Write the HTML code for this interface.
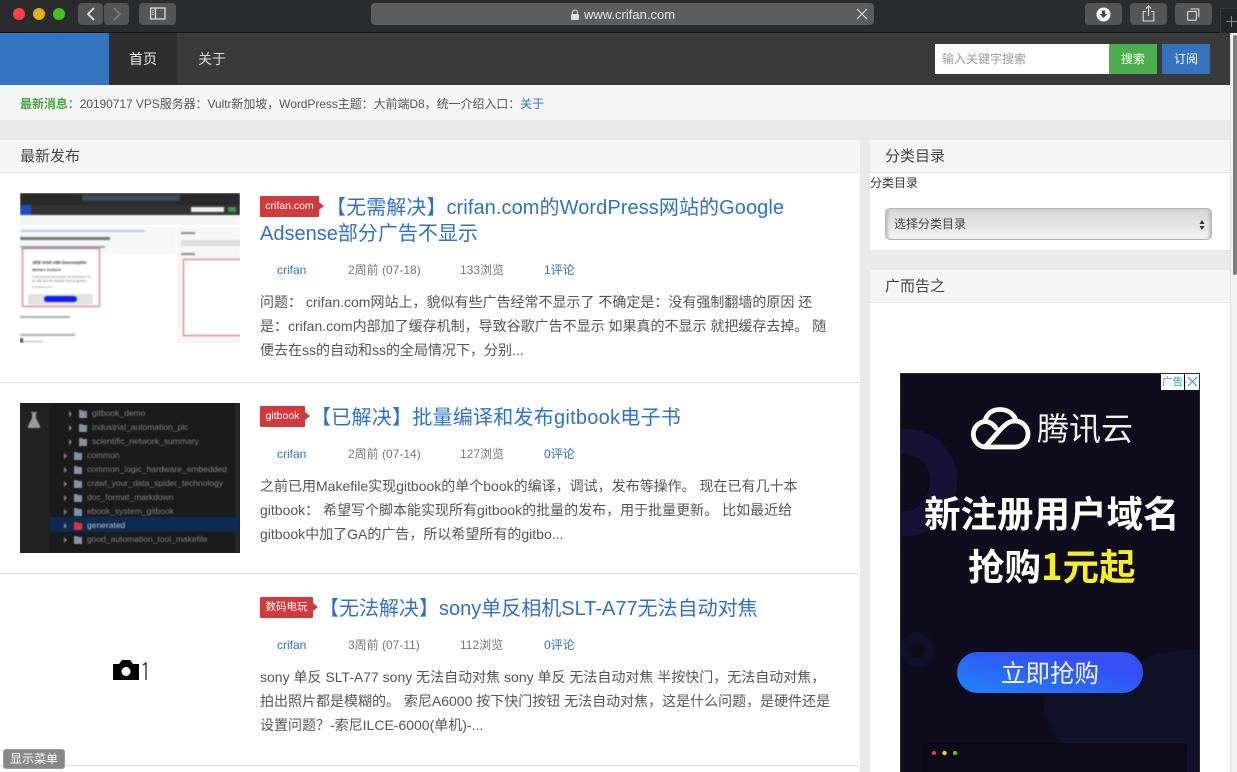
<!DOCTYPE html>
<html lang="zh-CN"><head><meta charset="utf-8"><title>crifan</title>
<style>
*{box-sizing:border-box}
html,body{margin:0;padding:0;width:1237px;height:772px;overflow:hidden;background:#e9e9e9}
body{position:relative;font-family:"Liberation Sans","Noto Sans CJK SC",sans-serif;color:#444}
.a{position:absolute;white-space:nowrap}
.btn{position:absolute;top:3px;height:22px;background:#555;border-radius:4px}
.t{position:absolute;left:260px;font-size:20px;line-height:26px;color:#2f72c4;white-space:nowrap}
.tag{position:absolute;left:260px;height:21px;background:#cf3a3f;color:#fff;font-size:10.500px;line-height:21px;text-align:center;border-radius:1px}
.tag:after{content:"";position:absolute;right:-5px;top:6px;border-left:5px solid #cf3a3f;border-top:4.500px solid transparent;border-bottom:4.500px solid transparent}
.m{position:absolute;font-size:12px;line-height:18px;color:#777;white-space:nowrap}
.l{color:#2f72c4}
.d{position:absolute;left:260px;font-size:14px;line-height:24px;color:#555;white-space:nowrap}
.hd{position:absolute;height:33px;background:#f5f5f5;border-bottom:1px solid #e6e6e6;font-size:15px;line-height:33px;color:#444}
.hr{position:absolute;left:0;width:860px;height:1px;background:#e3e3e3}
</style></head><body>

<!-- browser chrome -->
<div class="a" style="left:0;top:0;width:1237px;height:33px;background:#2a2b2c;border-bottom:1px solid #111"></div>
<div class="a" style="left:13px;top:8px;width:12px;height:12px;border-radius:50%;background:#fb4143"></div>
<div class="a" style="left:33px;top:8px;width:12px;height:12px;border-radius:50%;background:#e2b01e"></div>
<div class="a" style="left:53px;top:8px;width:12px;height:12px;border-radius:50%;background:#3fc325"></div>
<div class="btn" style="left:78px;width:25px"></div>
<div class="btn" style="left:104px;width:25px"></div>
<div class="btn" style="left:139px;width:37px"></div>
<svg class="a" style="left:78px;top:3px" width="52" height="22" fill="none"><path d="M16 5l-6 6 6 6" stroke="#e8e8e8" stroke-width="1.700"/><path d="M36 5l6 6-6 6" stroke="#7c7c7c" stroke-width="1.700"/></svg>
<svg class="a" style="left:150px;top:7px" width="16" height="14" fill="none" stroke="#e5e5e5" stroke-width="1.200"><rect x=".6" y="1" width="14.400" height="11"/><path d="M5.500 1v11"/><path d="M2 3.500h2M2 5.500h2M2 7.500h2" stroke-width=".8"/></svg>
<div class="btn" style="left:371px;width:503px;background:#5d5d5d"></div>
<svg class="a" style="left:570px;top:9px" width="10" height="11"><path d="M2.500 5V3.500a2.500 2.500 0 0 1 5 0V5" fill="none" stroke="#ddd" stroke-width="1"/><rect x="1" y="5" width="8" height="6" rx="1" fill="#ddd"/></svg>
<div class="a" style="left:584px;top:7px;font-size:13px;line-height:16px;color:#e8e8e8">www.crifan.com</div>
<svg class="a" style="left:856px;top:8px" width="12" height="12" stroke="#e0e0e0" stroke-width="1.100"><path d="M1 1l10 10M11 1L1 11"/></svg>
<div class="btn" style="left:1085px;width:37px"></div>
<div class="btn" style="left:1130px;width:37px"></div>
<div class="btn" style="left:1175px;width:37px"></div>
<svg class="a" style="left:1096px;top:7px" width="15" height="15"><circle cx="7.500" cy="7.500" r="7" fill="#f2f2f2"/><path d="M6 3.500h3V7h2.300L7.500 11 3.700 7H6z" fill="#444"/></svg>
<svg class="a" style="left:1142px;top:5px" width="13" height="17" fill="none" stroke="#dcdcdc" stroke-width="1.100"><path d="M4 6.500H1.200v9.500h10.600V6.500H9M6.500 11V1M3.800 3.600l2.700-2.700 2.700 2.700"/></svg>
<svg class="a" style="left:1187px;top:8px" width="13" height="13" fill="none" stroke="#dcdcdc" stroke-width="1.100"><rect x=".6" y="3.400" width="8.800" height="8.800" rx="1"/><path d="M3.500 1h8.300v8.300"/></svg>
<div class="a" style="left:1220px;top:8px;width:17px;height:25px;background:#232425;border:1px solid #3a3a3a;border-bottom:0;border-right:0"></div>
<svg class="a" style="left:1226px;top:16px" width="11" height="11" stroke="#8a8a8a" stroke-width="1"><path d="M5.500 0v11M0 5.500h11"/></svg>

<!-- nav -->
<div class="a" style="left:0;top:33px;width:1230px;height:52px;background:#3a3a3a"></div>
<div class="a" style="left:0;top:33px;width:109px;height:52px;background:#3473bd"></div>
<div class="a" style="left:109px;top:33px;width:68px;height:52px;background:#2e2e2e"></div>
<div class="a" style="left:129px;top:49px;font-size:14px;line-height:20px;color:#eee">首页</div>
<div class="a" style="left:198px;top:49px;font-size:14px;line-height:20px;color:#ddd">关于</div>
<div class="a" style="left:935px;top:44px;width:174px;height:30px;background:#fff;color:#999;font-size:12px;line-height:31px;padding-left:7px">输入关键字搜索</div>
<div class="a" style="left:1109px;top:44px;width:48px;height:30px;background:#4cae4c;color:#fff;font-size:12px;line-height:31px;text-align:center">搜索</div>
<div class="a" style="left:1162px;top:44px;width:48px;height:30px;background:#3473bd;color:#fff;font-size:12px;line-height:31px;text-align:center">订阅</div>

<!-- notice -->
<div class="a" style="left:0;top:85px;width:1230px;height:35px;background:#f5f5f5"></div>
<div class="a" style="left:20px;top:95px;font-size:12px;line-height:18px;color:#555;letter-spacing:-.06px"><b style="color:#46a63f;font-weight:700">最新消息</b><b style="color:#46a63f">：</b>20190717 VPS服务器：Vultr新加坡，WordPress主题：大前端D8，统一介绍入口：<span class="l">关于</span></div>

<!-- main -->
<div class="a" style="left:0;top:140px;width:860px;height:632px;background:#fff"></div>
<div class="hd" style="left:0;top:140px;width:860px;padding-left:20px">最新发布</div>

<!-- thumb 1 -->
<div class="a" style="left:20px;top:193px;width:220px;height:150px;background:#fff;overflow:hidden">
 <div style="filter:blur(.8px);position:absolute;inset:0">
  <div class="a" style="left:0;top:0;width:220px;height:12px;background:#2a2a2a"></div>
  <div class="a" style="left:62px;top:2px;width:98px;height:6px;background:#3c4a5c"></div>
  <div class="a" style="left:0;top:12px;width:220px;height:10px;background:#333"></div>
  <div class="a" style="left:0;top:12px;width:11px;height:10px;background:#1b4fc7"></div>
  <div class="a" style="left:171px;top:14px;width:33px;height:5px;background:#eee"></div>
  <div class="a" style="left:208px;top:14px;width:8px;height:5px;background:#3a9b3a"></div>
  <div class="a" style="left:0;top:22px;width:220px;height:10px;background:#f3f3f3"></div>
  <div class="a" style="left:0;top:34px;width:156px;height:27px;background:#f6f6f6"></div>
  <div class="a" style="left:0;top:37px;width:125px;height:2px;background:#9ab;opacity:.6"></div>
  <div class="a" style="left:0;top:44px;width:90px;height:3px;background:#777"></div>
  <div class="a" style="left:0;top:53px;width:85px;height:2px;background:#8ab"></div>
  <div class="a" style="left:157px;top:34px;width:63px;height:120px;background:#f6f6f6"></div>
  <div class="a" style="left:161px;top:39px;width:14px;height:2px;background:#888"></div>
  <div class="a" style="left:161px;top:47px;width:60px;height:6px;background:#ddd"></div>
  <div class="a" style="left:161px;top:60px;width:14px;height:2px;background:#888"></div>
  <div class="a" style="left:163px;top:66px;width:60px;height:77px;background:#fff;border:1.500px solid #e0555e"></div>
  <div class="a" style="left:2px;top:55px;width:78px;height:59px;background:#fff;border:1.500px solid #e0555e;border-radius:1px"></div>
  <div class="a" style="left:12px;top:66px;font-size:4.600px;line-height:7px;font-weight:700;color:#333">JEB Intel x86 Decompiler</div>
  <div class="a" style="left:12px;top:75px;font-size:3.500px;line-height:5px;font-weight:700;color:#444">Malware Analysis</div>
  <div class="a" style="left:12px;top:82px;font-size:3.200px;line-height:4px;color:#777">Professional Decompiler for Windows OS<br>for x86 and 64 malware and programs.</div>
  <div class="a" style="left:12px;top:92px;font-size:3px;line-height:4px;color:#777">prinsfwww.com</div>
  <div class="a" style="left:8px;top:101px;width:65px;height:11px;background:#e2e2e2"></div>
  <div class="a" style="left:24px;top:103px;width:33px;height:6px;border-radius:3px;background:#0b20f0"></div>
  <div class="a" style="left:0;top:123px;width:50px;height:2px;background:#aaa"></div>
  <div class="a" style="left:0;top:141px;width:55px;height:2px;background:#aaa"></div>
  <div class="a" style="left:0;top:145px;width:3px;height:5px;background:#555"></div>
  <div class="a" style="left:3px;top:148px;width:20px;height:1px;background:#aaa"></div>
 </div>
</div>

<div class="tag" style="top:196px;width:59px">crifan.com</div>
<div class="t" style="top:195px;left:326px;letter-spacing:.08px">【无需解决】crifan.com的WordPress网站的Google</div>
<div class="t" style="top:221px">Adsense部分广告不显示</div>
<div class="m l" style="left:277px;top:261px">crifan</div>
<div class="m" style="left:348px;top:261px">2周前 (07-18)</div>
<div class="m" style="left:460px;top:261px">133浏览</div>
<div class="m l" style="left:544px;top:261px">1评论</div>
<div class="d" style="top:290px">问题： crifan.com网站上，貌似有些广告经常不显示了 不确定是：没有强制翻墙的原因 还<br>是：crifan.com内部加了缓存机制，导致谷歌广告不显示 如果真的不显示 就把缓存去掉。 随<br>便去在ss的自动和ss的全局情况下，分别...</div>
<div class="hr" style="top:382px"></div>

<!-- thumb 2 -->
<div class="a" style="left:20px;top:403px;width:220px;height:150px;background:#1b1b1b;overflow:hidden">
 <div style="filter:blur(.6px);position:absolute;inset:0;font-size:8.500px;line-height:14px;color:#808080">
  <div class="a" style="left:0;top:0;width:30px;height:150px;background:#222"></div>
  <div class="a" style="left:215px;top:0;width:5px;height:150px;background:#272727"></div>
  <div class="a" style="left:30px;top:114px;width:190px;height:15px;background:#0c2c52"></div>
  <svg class="a" style="left:7px;top:9px" width="14" height="16"><path d="M4 0h6v1H9v5l4 8v2H1v-2l4-8V1H4z" fill="#999"/></svg>
  <svg class="a" style="left:0;top:0" width="80" height="150">
   <g fill="#7f95a8"><path d="M59 7h3l1 1h4v7h-8zM59 21h3l1 1h4v7h-8zM59 35h3l1 1h4v7h-8zM54 49h3l1 1h4v7h-8zM54 63h3l1 1h4v7h-8zM54 77h3l1 1h4v7h-8zM54 91h3l1 1h4v7h-8zM54 105h3l1 1h4v7h-8zM54 133h3l1 1h4v7h-8z"/></g>
   <path d="M54 119h3l1 1h4v7h-8z" fill="#e8303a"/><circle cx="60" cy="124" r="2.500" fill="#e8303a"/>
   <g fill="#888"><path d="M49 8l3 3-3 3zM49 22l3 3-3 3zM49 36l3 3-3 3zM44 50l3 3-3 3zM44 64l3 3-3 3zM44 78l3 3-3 3zM44 92l3 3-3 3zM44 106l3 3-3 3zM44 120l3 3-3 3zM44 134l3 3-3 3z"/></g>
  </svg>
  <div class="a" style="left:72px;top:3px">gitbook_demo</div>
  <div class="a" style="left:72px;top:17px">industrial_automation_plc</div>
  <div class="a" style="left:72px;top:31px">scientific_network_summary</div>
  <div class="a" style="left:67px;top:45px">common</div>
  <div class="a" style="left:67px;top:59px">common_logic_hardware_embedded</div>
  <div class="a" style="left:67px;top:73px">crawl_your_data_spider_technology</div>
  <div class="a" style="left:67px;top:87px">doc_format_markdown</div>
  <div class="a" style="left:67px;top:101px">ebook_system_gitbook</div>
  <div class="a" style="left:67px;top:115px;color:#b6c6d6">generated</div>
  <div class="a" style="left:67px;top:129px">good_automation_tool_makefile</div>
 </div>
</div>

<div class="tag" style="top:406px;width:45px">gitbook</div>
<div class="t" style="top:405px;left:311px;letter-spacing:.25px">【已解决】批量编译和发布gitbook电子书</div>
<div class="m l" style="left:277px;top:445px">crifan</div>
<div class="m" style="left:348px;top:445px">2周前 (07-14)</div>
<div class="m" style="left:460px;top:445px">127浏览</div>
<div class="m l" style="left:544px;top:445px">0评论</div>
<div class="d" style="top:474px">之前已用Makefile实现gitbook的单个book的编译，调试，发布等操作。 现在已有几十本<br>gitbook： 希望写个脚本能实现所有gitbook的批量的发布，用于批量更新。 比如最近给<br>gitbook中加了GA的广告，所以希望所有的gitbo...</div>
<div class="hr" style="top:573px"></div>

<!-- thumb 3 -->
<svg class="a" style="left:113px;top:659px" width="36" height="22"><path d="M0 5h6l3-4h8l3 4h6v16H0z" fill="#000"/><circle cx="13" cy="12.500" r="4.500" fill="#fff"/><path d="M30 6l3-2v17" fill="none" stroke="#333" stroke-width="1.400"/></svg>

<div class="tag" style="top:597px;width:53px">数码电玩</div>
<div class="t" style="top:596px;left:319px">【无法解决】sony单反相机SLT-A77无法自动对焦</div>
<div class="m l" style="left:277px;top:636px">crifan</div>
<div class="m" style="left:348px;top:636px">3周前 (07-11)</div>
<div class="m" style="left:460px;top:636px">112浏览</div>
<div class="m l" style="left:544px;top:636px">0评论</div>
<div class="d" style="top:665px">sony 单反 SLT-A77 sony 无法自动对焦 sony 单反 无法自动对焦 半按快门，无法自动对焦，<br>拍出照片都是模糊的。 索尼A6000 按下快门按钮 无法自动对焦，这是什么问题，是硬件还是<br>设置问题？-索尼ILCE-6000(单机)-...</div>
<div class="hr" style="top:765px"></div>

<div class="a" style="left:3px;top:749px;width:62px;height:20px;background:#888;border:1px solid #9a9a9a;border-radius:3px;color:#fff;font-size:12px;line-height:18px;text-align:center">显示菜单</div>

<!-- sidebar -->
<div class="a" style="left:870px;top:140px;width:360px;height:110px;background:#fff"></div>
<div class="hd" style="left:870px;top:140px;width:360px;padding-left:15px">分类目录</div>
<div class="a" style="left:870px;top:175px;font-size:12px;line-height:16px;color:#333">分类目录</div>
<div class="a" style="left:885px;top:208px;width:327px;height:32px;border:1px solid #b5b5b5;border-radius:5px;background:linear-gradient(#d6d6d6,#e4e4e4 55%,#f4f4f4);box-shadow:inset 3px 0 3px -2px #aaa,inset -3px 0 3px -2px #aaa;font-size:12px;line-height:30px;padding-left:8px;color:#444">选择分类目录</div>
<svg class="a" style="left:1199px;top:220px" width="6" height="10" fill="#333"><path d="M3 0l2.500 4h-5zM3 10L.5 6h5z"/></svg>

<div class="a" style="left:870px;top:270px;width:360px;height:502px;background:#fff"></div>
<div class="hd" style="left:870px;top:270px;width:360px;padding-left:15px">广而告之</div>

<!-- ad -->
<div class="a" style="left:900px;top:373px;width:300px;height:399px;background:#0f0c1e;overflow:hidden;border:1px solid #2b2a3c;border-bottom:0">
 <svg class="a" style="left:-1px;top:0" width="300" height="399">
  <path d="M0 55c32-3 57 20 57 52s-25 58-57 55v-25c18 2 30-13 30-30s-12-28-30-27z" fill="#181236"/>
  <circle cx="17" cy="276" r="12.500" fill="none" stroke="#13102a" stroke-width="9"/>
  <path d="M160 369C148 350 140 335 146 318C165 315 180 320 205 305C235 285 265 275 300 276V399H160z" fill="#11112a"/>
  <rect x="23" y="369" width="264" height="40" rx="4" fill="#0c0a18"/>
  <circle cx="34" cy="379" r="2.200" fill="#f03a3a"/><circle cx="44.500" cy="379" r="2.200" fill="#f5d31f"/><circle cx="55" cy="379" r="2.200" fill="#2bd62b"/>
  <rect x="43" y="398" width="62" height="1" fill="#555"/><rect x="118" y="398" width="65" height="1" fill="#7a58a8"/><rect x="196" y="398" width="64" height="1" fill="#4f80b0"/>
  <g fill="none" stroke="#fff" stroke-width="4.800" stroke-linecap="round" stroke-linejoin="round">
   <path d="M85 47C87 39 93 35.500 100 35.500C107 35.500 113 39 116 46"/>
   <path d="M96 54C93 50 89 47.500 85 47.500A12.800 12.800 0 0 0 85 73H115A13 13 0 0 0 115 47C108 47 104 52 100 56L86 72"/>
  </g>
  <linearGradient id="g" x1="0" x2="1" y1="1" y2="0"><stop offset="0" stop-color="#1e86f6"/><stop offset=".7" stop-color="#3550f5"/></linearGradient>
  <rect x="57" y="278" width="186" height="41" rx="20.500" fill="url(#g)"/>
 </svg>
 <div class="a" style="left:136px;top:32px;font-size:32px;line-height:42px;color:#f2f2f2;font-family:'Noto Sans CJK SC',sans-serif;font-weight:400">腾讯云</div>
 <div class="a" style="left:23px;top:115px;font-size:36.500px;line-height:46px;font-weight:700;color:#fff;font-family:'Noto Sans CJK SC',sans-serif">新注册用户域名</div>
 <div class="a" style="left:67px;top:168px;font-size:36.500px;line-height:46px;font-weight:700;color:#fff;font-family:'Noto Sans CJK SC',sans-serif">抢购<span style="color:#f7ee2b">1元起</span></div>
 <div class="a" style="left:100px;top:283px;font-size:24.500px;line-height:32px;color:#f2f4ff;font-family:'Noto Sans CJK SC',sans-serif">立即抢购</div>
 <div class="a" style="left:260px;top:0;width:23px;height:16px;background:#fff;color:#1ba4cf;font-size:10.500px;line-height:16px;text-align:center">广告</div>
 <div class="a" style="left:284px;top:0;width:15px;height:16px;background:#fff"><svg width="15" height="16" stroke="#1ba4cf" stroke-width="1.100" style="display:block"><path d="M3 3l9 9M12 3l-9 9"/></svg></div>
</div>

<!-- scrollbar -->
<div class="a" style="left:1230px;top:33px;width:7px;height:739px;background:#f1f1f1;border-left:1px solid #e2e2e2"></div>
<div class="a" style="left:1233px;top:35px;width:4px;height:240px;background:#7e7e7e;border-radius:2px"></div>
</body></html>
